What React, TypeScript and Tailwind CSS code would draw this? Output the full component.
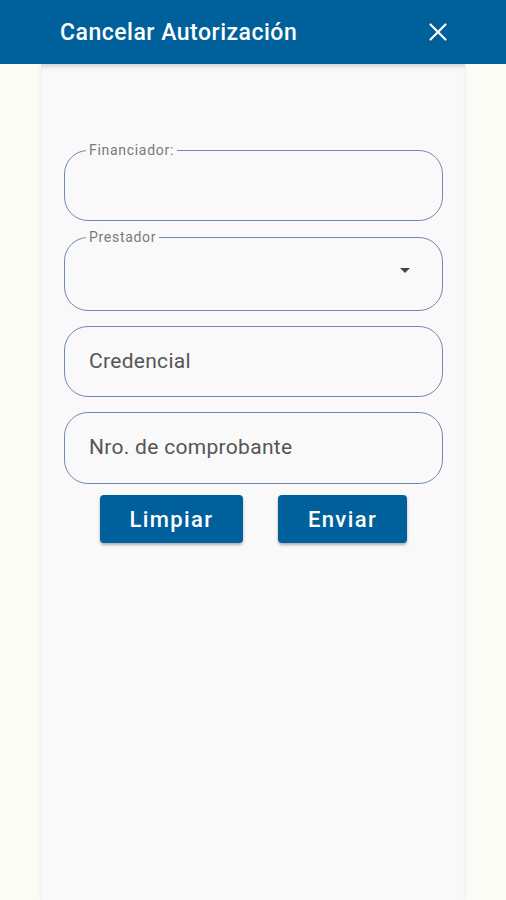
import { X } from 'lucide-react'

function OutlinedLegendField({
  label,
  height,
  withArrow,
}: {
  label: string
  height: string
  withArrow?: boolean
}) {
  return (
    <fieldset
      className={`relative m-0 min-w-0 rounded-[24px] border border-[#7189b0] p-0 ${height}`}
    >
      <legend className="ml-[21px] px-[3px] text-[14px] leading-[15px] tracking-[0.7px] text-[#7a7a7a]">
        {label}
      </legend>
      {withArrow ? (
        <div className="flex h-full items-center justify-end pr-[32px] pb-[14px]">
          <span className="h-0 w-0 border-x-[5px] border-t-[5px] border-x-transparent border-t-[#444]" />
        </div>
      ) : null}
    </fieldset>
  )
}

function OutlinedField({ placeholder, height }: { placeholder: string; height: string }) {
  return (
    <div
      className={`flex items-center rounded-[24px] border border-[#7189b0] px-[24px] text-[21px] tracking-[0.3px] text-[#555] ${height}`}
    >
      {placeholder}
    </div>
  )
}

export default function App() {
  return (
    <div className="flex min-h-[900px] flex-col bg-[#fbfcf5] font-['Roboto',sans-serif]">
      <header className="relative z-10 flex h-16 shrink-0 items-center justify-between bg-[#00609c] pr-[53px] pl-[60px]">
        <h1 className="pt-[2px] text-[23px] font-medium tracking-[0.5px] text-white">
          Cancelar Autorización
        </h1>
        <X className="h-[30px] w-[30px] text-white" strokeWidth={1.7} />
      </header>

      <main className="mx-[41px] flex w-[424px] flex-1 flex-col bg-[#f9f9f9] px-[22px] pt-[79px] shadow-[0_0_4px_rgba(0,0,0,0.08),inset_0_5px_5px_-3px_rgba(0,0,0,0.18)]">
        <div className="pl-px">
          <OutlinedLegendField label="Financiador:" height="h-[78px]" />
          <div className="mt-[9px]">
            <OutlinedLegendField label="Prestador" height="h-[81px]" withArrow />
          </div>
          <div className="mt-[15px]">
            <OutlinedField placeholder="Credencial" height="h-[71px]" />
          </div>
          <div className="mt-[15px]">
            <OutlinedField placeholder="Nro. de comprobante" height="h-[72px]" />
          </div>
        </div>

        <div className="mt-[11px] flex justify-center gap-[35px] pl-px">
          <button
            type="button"
            className="h-[48px] w-[143px] rounded-[4px] bg-[#00609c] text-[22px] font-medium tracking-[1.4px] text-white shadow-[0_2px_3px_rgba(0,0,0,0.3)]"
          >
            Limpiar
          </button>
          <button
            type="button"
            className="h-[48px] w-[129px] rounded-[4px] bg-[#00609c] text-[22px] font-medium tracking-[1.4px] text-white shadow-[0_2px_3px_rgba(0,0,0,0.3)]"
          >
            Enviar
          </button>
        </div>
      </main>
    </div>
  )
}
